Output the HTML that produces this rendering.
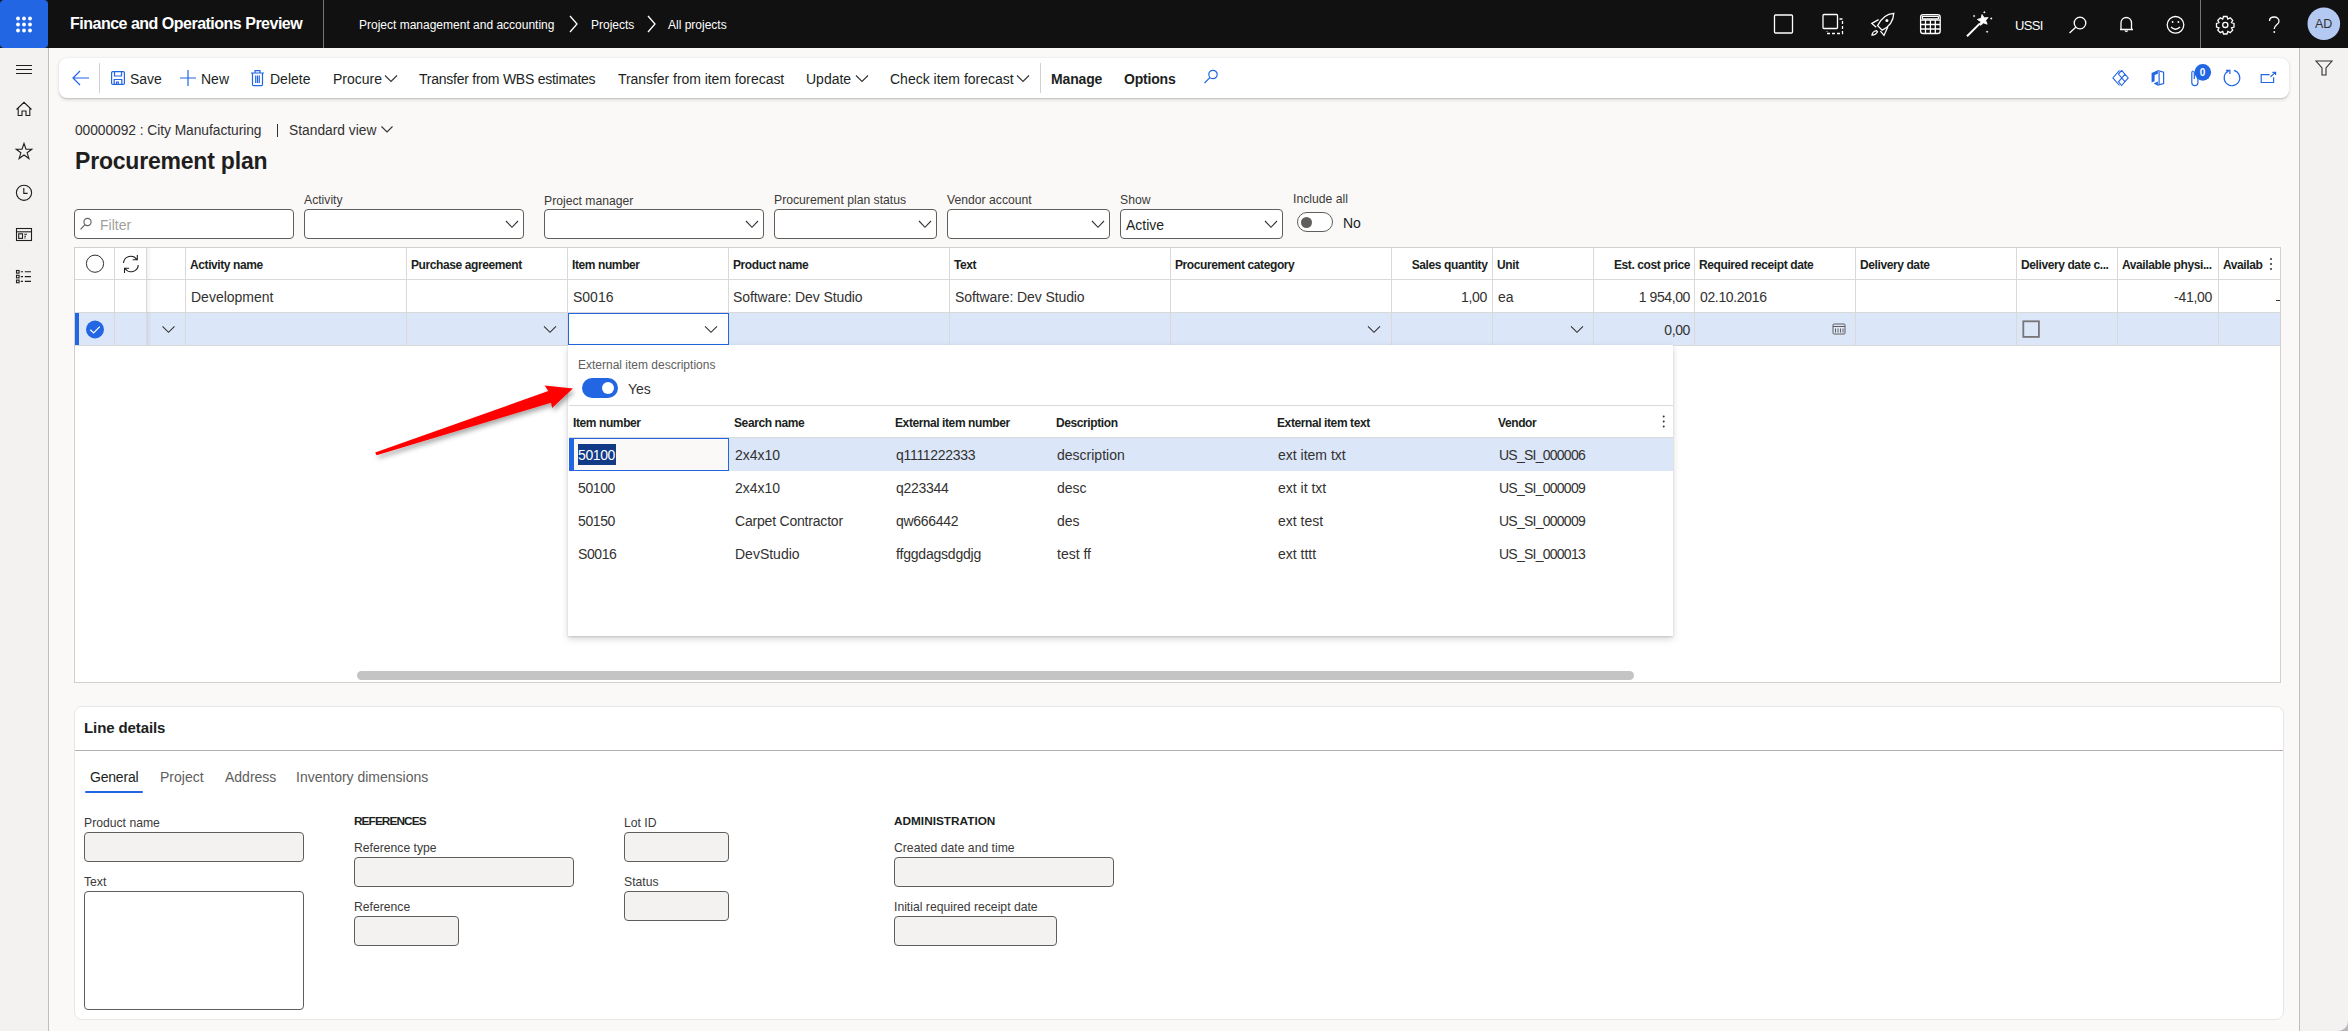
<!DOCTYPE html>
<html><head><meta charset="utf-8">
<style>
*{box-sizing:border-box;margin:0;padding:0}
html,body{width:2348px;height:1031px;overflow:hidden}
body{position:relative;background:#faf9f8;font-family:"Liberation Sans",sans-serif;color:#323130;font-size:14px}
.a{position:absolute;white-space:nowrap}
svg{position:absolute;overflow:visible}
/* top bar */
#top{left:0;top:0;width:2348px;height:48px;background:#111111}
#waffle{left:0;top:0;width:48px;height:48px;background:#2266e3;border-radius:4px}
.tb{color:#fff}
/* left nav */
#lnav{left:0;top:48px;width:49px;height:983px;background:#f3f2f1;border-right:1px solid #c0bebb}
#rpanel{left:2299px;top:48px;width:49px;height:983px;background:#f3f2f1;border-left:1px solid #c0bebb}
#cmd{left:59px;top:58px;width:2230px;height:40px;background:#fff;border-radius:8px;box-shadow:0 1.6px 3.6px rgba(0,0,0,.13),0 0.3px 0.9px rgba(0,0,0,.11)}
.ct{font-size:14px;color:#201f1e;top:70px}
.blue{stroke:#2266e3}
</style></head><body>

<!-- TOP BAR -->
<div id="top" class="a"></div>
<div id="waffle" class="a"></div>
<svg style="left:0;top:0" width="48" height="48">
 <g fill="#fff">
  <circle cx="18" cy="18.5" r="1.9"/><circle cx="24" cy="18.5" r="1.9"/><circle cx="30" cy="18.5" r="1.9"/>
  <circle cx="18" cy="24.5" r="1.9"/><circle cx="24" cy="24.5" r="1.9"/><circle cx="30" cy="24.5" r="1.9"/>
  <circle cx="18" cy="30.5" r="1.9"/><circle cx="24" cy="30.5" r="1.9"/><circle cx="30" cy="30.5" r="1.9"/>
 </g>
</svg>
<div class="a tb" style="left:70px;top:15px;font-size:16px;font-weight:bold;letter-spacing:-0.5px">Finance and Operations Preview</div>
<div class="a" style="left:323px;top:0px;width:1px;height:48px;background:#777"></div>
<div class="a tb" style="left:359px;top:18px;font-size:12px">Project management and accounting</div>
<div class="a tb" style="left:591px;top:18px;font-size:12px">Projects</div>
<div class="a tb" style="left:668px;top:18px;font-size:12px">All projects</div>
<svg style="left:0;top:0" width="2348" height="48">
 <g fill="none" stroke="#fff" stroke-width="1.3">
  <path d="M570 16 L577 24 L570 32"/>
  <path d="M648 16 L655 24 L648 32"/>
 </g>
</svg>


<!-- top right icons -->
<svg style="left:0;top:0" width="2348" height="48">
 <g fill="none" stroke="#fff" stroke-width="1.3">
  <rect x="1774.5" y="15" width="18" height="18" rx="1"/>
  <rect x="1823" y="14.5" width="14.5" height="14" rx="1"/>
  <path d="M1839.5 19 H1842.5 V33.5 H1827 V31" stroke-dasharray="3 2"/>
  <path d="M1893.8 13.3 C1886 13.8 1880.6 19.4 1877.6 25.6 L1882.2 30.2 C1888.4 27.2 1893.4 21.6 1893.8 13.3 Z"/>
  <path d="M1878.6 19.6 L1871.8 23.4 L1876.2 27.2 M1887.8 27 L1884 35.4 L1880.4 31.2"/>
  <path d="M1876.4 30.6 C1873.6 31.1 1872.1 33.6 1872 35.1 C1873.7 35.1 1876.4 33.9 1877.5 31.8 Z"/>
  <circle cx="1886.9" cy="20.5" r="1.5" fill="#fff" stroke="none"/>
  <rect x="1920.6" y="14.6" width="19.6" height="18.9" rx="2.6"/>
  <rect x="1922.4" y="16.4" width="16" height="2.6" rx="0.5"/>
  <path d="M1920.6 20.2 H1940.2 M1920.6 24.5 H1940.2 M1920.6 29 H1940.2 M1925.5 20.2 V33.5 M1930.4 20.2 V33.5 M1935.3 20.2 V33.5"/>
  <path d="M1967 36.2 L1980 23.4" stroke-width="2"/>
  <path d="M1982.0 14.5 L1984.2 17.8 L1988.1 17.5 L1985.7 20.6 L1987.2 24.2 L1983.5 22.9 L1980.5 25.4 L1980.6 21.5 L1977.3 19.4 L1981.1 18.3 Z" fill="#fff" stroke="#fff" stroke-width="0.8" stroke-linejoin="round"/>
  <path d="M1974.1 14.6 L1974.55 15.55 L1975.5 16 L1974.55 16.45 L1974.1 17.4 L1973.6499999999999 16.45 L1972.6999999999998 16 L1973.6499999999999 15.55 Z M1984.3 10.799999999999999 L1984.75 11.75 L1985.7 12.2 L1984.75 12.649999999999999 L1984.3 13.6 L1983.85 12.649999999999999 L1982.8999999999999 12.2 L1983.85 11.75 Z M1991.2 17.1 L1991.65 18.05 L1992.6000000000001 18.5 L1991.65 18.95 L1991.2 19.9 L1990.75 18.95 L1989.8 18.5 L1990.75 18.05 Z M1987.1 30.400000000000002 L1987.55 31.35 L1988.5 31.8 L1987.55 32.25 L1987.1 33.2 L1986.6499999999999 32.25 L1985.6999999999998 31.8 L1986.6499999999999 31.35 Z" fill="#fff" stroke="none"/>
  <circle cx="2080" cy="23" r="5.8"/>
  <path d="M2076 27 L2069.5 33"/>
  <path d="M2121 29.5 V23 C2121 19.5 2123.5 17.5 2126.3 17.5 C2129 17.5 2131.5 19.5 2131.5 23 V29.5 H2120 H2133"/>
  <path d="M2125 30.5 Q2126.3 32.5 2127.6 30.5"/>
  <circle cx="2175.5" cy="24.8" r="8.3"/>
  <path d="M2171 27 Q2175.5 31.5 2180 27"/>
  <circle cx="2172.6" cy="22" r="0.9" fill="#fff" stroke="none"/><circle cx="2178.4" cy="22" r="0.9" fill="#fff" stroke="none"/>
  <circle cx="2225.3" cy="24.9" r="2.6"/>
  <path d="M2223.5 16.5 H2227 L2227.8 19 L2230.2 17.8 L2232.7 20.3 L2231.5 22.7 L2234 23.5 V27 L2231.5 27.8 L2232.7 30.2 L2230.2 32.7 L2227.8 31.5 L2227 34 H2223.5 L2222.7 31.5 L2220.3 32.7 L2217.8 30.2 L2219 27.8 L2216.5 27 V23.5 L2219 22.7 L2217.8 20.3 L2220.3 17.8 L2222.7 19 Z"/>
  <path d="M2269.5 21 C2269.5 18.5 2271.5 17 2274.2 17 C2277 17 2279 18.8 2279 21.2 C2279 24.5 2274.3 25 2274.3 28.5 V29"/>
  <circle cx="2274.3" cy="32" r="0.9" fill="#fff" stroke="none"/>
 </g>
 <path d="M2200.5 0 V48" stroke="#777" stroke-width="1"/>
 <circle cx="2323.8" cy="23.8" r="16.3" fill="#b4c9f2"/>
</svg>
<div class="a tb" style="left:2015px;top:17.5px;font-size:13px;letter-spacing:-0.7px">USSI</div>
<div class="a" style="left:2315px;top:17px;font-size:12.5px;color:#323130">AD</div>


<!-- PAGE HEADER -->
<div class="a" style="left:75px;top:123px;font-size:13.8px;color:#323130;letter-spacing:-0.05px">00000092 : City Manufacturing</div>
<div class="a" style="left:277px;top:124px;width:1.3px;height:13px;background:#323130"></div>
<div class="a" style="left:289px;top:123px;font-size:13.8px;color:#323130">Standard view</div>
<svg style="left:0;top:0" width="400" height="200"><path d="M381.5 126.5 L387 132 L392.5 126.5" fill="none" stroke="#323130" stroke-width="1.1"/></svg>
<div class="a" style="left:75px;top:148px;font-size:23px;font-weight:bold;color:#201f1e;letter-spacing:-0.2px">Procurement plan</div>

<!-- FILTERS -->
<style>
.lbl{font-size:12.2px;color:#3b3a39;top:193px}
.inp{position:absolute;top:209px;height:30px;border:1px solid #605e5c;border-radius:4px;background:#fff}
.chev{fill:none;stroke:#323130;stroke-width:1.1}
</style>
<div class="inp" style="left:74px;width:220px"></div>
<svg style="left:0;top:0" width="100" height="240"><g fill="none" stroke="#605e5c" stroke-width="1.1"><circle cx="87.5" cy="222" r="3.6"/><path d="M85 224.6 L80.5 229.4"/></g></svg>
<div class="a" style="left:100px;top:217px;font-size:14px;color:#a19f9d">Filter</div>

<div class="a lbl" style="left:304px">Activity</div>
<div class="inp" style="left:304px;width:220px"></div>
<div class="a lbl" style="left:544px;top:194px">Project manager</div>
<div class="inp" style="left:544px;width:220px"></div>
<div class="a lbl" style="left:774px">Procurement plan status</div>
<div class="inp" style="left:774px;width:163px"></div>
<div class="a lbl" style="left:947px">Vendor account</div>
<div class="inp" style="left:947px;width:163px"></div>
<div class="a lbl" style="left:1120px">Show</div>
<div class="inp" style="left:1120px;width:163px"></div>
<div class="a" style="left:1126px;top:217px;font-size:14px;color:#201f1e">Active</div>
<div class="a lbl" style="left:1293px;top:192px">Include all</div>
<div class="a" style="left:1297px;top:212px;width:36px;height:20px;border:1px solid #605e5c;border-radius:10px;background:#fff"></div>
<div class="a" style="left:1301px;top:216.5px;width:11px;height:11px;border-radius:6px;background:#605e5c"></div>
<div class="a" style="left:1343px;top:215px;font-size:14px;color:#201f1e">No</div>
<svg style="left:0;top:0" width="1300" height="240">
 <g class="chev">
  <path d="M506 221 L512 227.3 L518 221"/>
  <path d="M746 221 L752 227.3 L758 221"/>
  <path d="M919 221 L925 227.3 L931 221"/>
  <path d="M1092 221 L1098 227.3 L1104 221"/>
  <path d="M1265 221 L1271 227.3 L1277 221"/>
 </g>
</svg>


<!-- GRID -->
<style>
.vl{position:absolute;top:248px;width:1px;height:97px;background:#d9d9d9}
.gh{position:absolute;top:258px;font-size:12px;font-weight:bold;color:#201f1e;letter-spacing:-0.4px;white-space:nowrap}
.gc{position:absolute;top:289px;font-size:14px;color:#323130;white-space:nowrap}
.gr{text-align:right}
</style>
<div class="a" style="left:74px;top:247px;width:2207px;height:436px;background:#fff;border:1px solid #d2d0ce"></div>
<div class="a" style="left:75px;top:313px;width:2205px;height:32px;background:#dbe6f9"></div>
<div class="a" style="left:75px;top:279px;width:2205px;height:1px;background:#d9d9d9"></div>
<div class="a" style="left:75px;top:312px;width:2205px;height:1px;background:#d9d9d9"></div>
<div class="a" style="left:75px;top:345px;width:2205px;height:1px;background:#d9d9d9"></div>
<div class="vl" style="left:114px"></div><div class="vl" style="left:146px"></div><div class="vl" style="left:185px"></div><div class="vl" style="left:406px"></div><div class="vl" style="left:567px"></div><div class="vl" style="left:728px"></div><div class="vl" style="left:949px"></div><div class="vl" style="left:1170px"></div><div class="vl" style="left:1391px"></div><div class="vl" style="left:1492px"></div><div class="vl" style="left:1593px"></div><div class="vl" style="left:1694px"></div><div class="vl" style="left:1855px"></div><div class="vl" style="left:2016px"></div><div class="vl" style="left:2117px"></div><div class="vl" style="left:2218px"></div>
<div class="a" style="left:147px;top:248px;width:5px;height:97px;background:linear-gradient(to right,rgba(0,0,0,.06),rgba(0,0,0,0))"></div>
<div class="a" style="left:75px;top:313px;width:4px;height:32px;background:#2266e3"></div>
<!-- header -->
<svg style="left:0;top:0" width="200" height="350">
 <circle cx="95" cy="263.7" r="8.6" fill="none" stroke="#323130" stroke-width="1"/>
 <g fill="none" stroke="#201f1e" stroke-width="1.1">
  <path d="M123.5 263 A7.3 7.3 0 0 1 136.8 259.5 M137.3 255 V259.8 H132.7"/>
  <path d="M138.3 265 A7.3 7.3 0 0 1 125 268.5 M124.5 273 V268.2 H129.1"/>
 </g>
 <circle cx="95" cy="329.5" r="9" fill="#2266e3"/>
 <path d="M90.3 329.8 L93.6 333 L99.8 326.6" fill="none" stroke="#fff" stroke-width="1.2"/>
 <path d="M162.5 326.3 L168.5 332.3 L174.5 326.3" fill="none" stroke="#323130" stroke-width="1.1"/>
</svg>
<div class="gh" style="left:190px">Activity name</div>
<div class="gh" style="left:411px">Purchase agreement</div>
<div class="gh" style="left:572px">Item number</div>
<div class="gh" style="left:733px">Product name</div>
<div class="gh" style="left:954px">Text</div>
<div class="gh" style="left:1175px">Procurement category</div>
<div class="gh gr" style="right:calc(2348px - 1487.5px)">Sales quantity</div>
<div class="gh" style="left:1497px">Unit</div>
<div class="gh gr" style="right:calc(2348px - 1690px)">Est. cost price</div>
<div class="gh" style="left:1699px">Required receipt date</div>
<div class="gh" style="left:1860px">Delivery date</div>
<div class="gh" style="left:2021px">Delivery date c...</div>
<div class="gh" style="left:2122px">Available physi...</div>
<div class="gh" style="left:2223px">Availab</div>
<svg style="left:0;top:0" width="2348" height="350">
 <g fill="#323130"><circle cx="2271" cy="259" r="1"/><circle cx="2271" cy="264" r="1"/><circle cx="2271" cy="269" r="1"/></g>
</svg>
<!-- row 1 -->
<div class="gc" style="left:191px">Development</div>
<div class="gc" style="left:573px">S0016</div>
<div class="gc" style="left:733px;letter-spacing:-0.1px">Software: Dev Studio</div>
<div class="gc" style="left:955px;letter-spacing:-0.1px">Software: Dev Studio</div>
<div class="gc gr" style="right:calc(2348px - 1487px);letter-spacing:-0.3px">1,00</div>
<div class="gc" style="left:1498px">ea</div>
<div class="gc gr" style="right:calc(2348px - 1690px);letter-spacing:-0.4px">1 954,00</div>
<div class="gc" style="left:1700px;letter-spacing:-0.35px">02.10.2016</div>
<div class="gc gr" style="right:calc(2348px - 2212px);letter-spacing:-0.3px">-41,00</div>
<div class="a" style="left:2276px;top:300px;width:4px;height:1.2px;background:#323130"></div>
<!-- row 2 -->
<div class="a" style="left:568px;top:313px;width:161px;height:32px;background:#fff;border:1.5px solid #2266e3"></div>
<svg style="left:0;top:0" width="2348" height="350">
 <g fill="none" stroke="#323130" stroke-width="1.1">
  <path d="M544 326.3 L550 332.3 L556 326.3"/>
  <path d="M705 326.3 L711 332.3 L717 326.3"/>
  <path d="M1368 326.3 L1374 332.3 L1380 326.3"/>
  <path d="M1571 326.3 L1577 332.3 L1583 326.3"/>
 </g>
 <g fill="none" stroke="#605e5c" stroke-width="1">
  <rect x="1833" y="324" width="12" height="10" rx="1"/>
  <path d="M1833 326.5 H1845 M1835.5 328.5 V332.5 M1838 328.5 V332.5 M1840.5 328.5 V332.5 M1843 328.5 V332.5"/>
 </g>
 <rect x="2023.3" y="321.3" width="15.6" height="15.6" fill="none" stroke="#767676" stroke-width="1.8"/>
</svg>
<div class="gc gr" style="right:calc(2348px - 1690px);top:322px;letter-spacing:-0.4px">0,00</div>
<!-- scrollbar -->
<div class="a" style="left:357px;top:671px;width:1277px;height:9px;border-radius:5px;background:#c4c4c4"></div>



<!-- LINE DETAILS -->
<style>
.fl{position:absolute;font-size:12.2px;color:#3b3a39;white-space:nowrap}
.fi{position:absolute;height:30px;border:1px solid #605e5c;border-radius:4px;background:#f3f2f1}
.sec{position:absolute;font-size:11.5px;font-weight:bold;color:#201f1e;letter-spacing:-0.5px;white-space:nowrap}
.tab{position:absolute;top:769px;font-size:14px;color:#605e5c;white-space:nowrap}
</style>
<div class="a" style="left:74px;top:706px;width:2210px;height:314px;background:#fff;border:1px solid #e8e6e4;border-radius:8px"></div>
<div class="a" style="left:84px;top:719px;font-size:15px;font-weight:bold;color:#201f1e;letter-spacing:-0.1px">Line details</div>
<div class="a" style="left:75px;top:750px;width:2208px;height:1px;background:#b3b0ad"></div>
<div class="tab" style="left:90px;color:#201f1e;letter-spacing:-0.2px">General</div>
<div class="tab" style="left:160px">Project</div>
<div class="tab" style="left:225px">Address</div>
<div class="tab" style="left:296px">Inventory dimensions</div>
<div class="a" style="left:85px;top:791px;width:58px;height:2px;border-radius:1px;background:#2266e3"></div>

<div class="fl" style="left:84px;top:816px">Product name</div>
<div class="fi" style="left:84px;top:832px;width:220px"></div>
<div class="fl" style="left:84px;top:875px">Text</div>
<div class="fi" style="left:84px;top:891px;width:220px;height:119px;background:#fff"></div>

<div class="sec" style="left:354px;top:814px;font-size:11.8px;letter-spacing:-0.9px">REFERENCES</div>
<div class="fl" style="left:354px;top:841px">Reference type</div>
<div class="fi" style="left:354px;top:857px;width:220px"></div>
<div class="fl" style="left:354px;top:900px">Reference</div>
<div class="fi" style="left:354px;top:916px;width:105px"></div>

<div class="fl" style="left:624px;top:816px">Lot ID</div>
<div class="fi" style="left:624px;top:832px;width:105px"></div>
<div class="fl" style="left:624px;top:875px">Status</div>
<div class="fi" style="left:624px;top:891px;width:105px"></div>

<div class="sec" style="left:894px;top:814px;font-size:11.8px;letter-spacing:0px">ADMINISTRATION</div>
<div class="fl" style="left:894px;top:841px">Created date and time</div>
<div class="fi" style="left:894px;top:857px;width:220px"></div>
<div class="fl" style="left:894px;top:900px">Initial required receipt date</div>
<div class="fi" style="left:894px;top:916px;width:163px"></div>

<!-- DROPDOWN -->
<style>
.lh{position:absolute;top:416px;font-size:12px;font-weight:bold;color:#201f1e;letter-spacing:-0.4px;white-space:nowrap}
.lc{position:absolute;font-size:14px;color:#323130;white-space:nowrap}
</style>
<div class="a" style="left:568px;top:345px;width:1105px;height:291px;background:#fff;box-shadow:0 3.2px 7.2px rgba(0,0,0,.16),0 0.6px 1.8px rgba(0,0,0,.13)"></div>
<div class="a" style="left:578px;top:358px;font-size:12px;color:#605e5c">External item descriptions</div>
<div class="a" style="left:582px;top:378px;width:36px;height:20px;border-radius:10px;background:#2266e3"></div>
<div class="a" style="left:601.8px;top:381.8px;width:12.2px;height:12.2px;border-radius:50%;background:#fff"></div>
<div class="a" style="left:628px;top:381px;font-size:14px;color:#323130">Yes</div>
<div class="a" style="left:569px;top:405px;width:1104px;height:1px;background:#d9d9d9"></div>
<div class="a" style="left:569px;top:437px;width:1104px;height:1px;background:#d9d9d9"></div>
<div class="lh" style="left:573px">Item number</div>
<div class="lh" style="left:734px">Search name</div>
<div class="lh" style="left:895px">External item number</div>
<div class="lh" style="left:1056px">Description</div>
<div class="lh" style="left:1277px">External item text</div>
<div class="lh" style="left:1498px">Vendor</div>
<svg style="left:0;top:0" width="2348" height="640">
 <g fill="#323130"><circle cx="1663.7" cy="416.5" r="1"/><circle cx="1663.7" cy="421.5" r="1"/><circle cx="1663.7" cy="426.5" r="1"/></g>
</svg>
<div class="a" style="left:569px;top:438px;width:1104px;height:33px;background:#dbe6f9"></div>
<div class="a" style="left:569px;top:438px;width:4px;height:33px;background:#2266e3"></div>
<div class="a" style="left:573px;top:438px;width:156px;height:32.5px;background:#faf9f8;border:1.5px solid #2266e3"></div>
<div class="a" style="left:578px;top:444px;width:38px;height:21px;background:#123a87"></div>
<div class="lc" style="left:578px;top:447px;color:#fff;letter-spacing:-0.4px">50100</div>
<div class="lc" style="left:735px;top:447px">2x4x10</div>
<div class="lc" style="left:896px;top:447px;letter-spacing:-0.3px">q1111222333</div>
<div class="lc" style="left:1057px;top:447px">description</div>
<div class="lc" style="left:1278px;top:447px">ext item txt</div>
<div class="lc" style="left:1499px;top:447px;letter-spacing:-0.75px">US_SI_000006</div>

<div class="lc" style="left:578px;top:480px;letter-spacing:-0.4px">50100</div>
<div class="lc" style="left:735px;top:480px">2x4x10</div>
<div class="lc" style="left:896px;top:480px;letter-spacing:-0.3px">q223344</div>
<div class="lc" style="left:1057px;top:480px">desc</div>
<div class="lc" style="left:1278px;top:480px">ext it txt</div>
<div class="lc" style="left:1499px;top:480px;letter-spacing:-0.75px">US_SI_000009</div>

<div class="lc" style="left:578px;top:513px;letter-spacing:-0.4px">50150</div>
<div class="lc" style="left:735px;top:513px;letter-spacing:-0.2px">Carpet Contractor</div>
<div class="lc" style="left:896px;top:513px;letter-spacing:-0.3px">qw666442</div>
<div class="lc" style="left:1057px;top:513px">des</div>
<div class="lc" style="left:1278px;top:513px">ext test</div>
<div class="lc" style="left:1499px;top:513px;letter-spacing:-0.75px">US_SI_000009</div>

<div class="lc" style="left:578px;top:546px;letter-spacing:-0.4px">S0016</div>
<div class="lc" style="left:735px;top:546px">DevStudio</div>
<div class="lc" style="left:896px;top:546px;letter-spacing:-0.2px">ffggdagsdgdjg</div>
<div class="lc" style="left:1057px;top:546px">test ff</div>
<div class="lc" style="left:1278px;top:546px">ext tttt</div>
<div class="lc" style="left:1499px;top:546px;letter-spacing:-0.75px">US_SI_000013</div>

<!-- RED ARROW -->
<svg style="left:0;top:0" width="700" height="500">
 <defs><filter id="sh" x="-20%" y="-50%" width="140%" height="200%"><feDropShadow dx="2" dy="3" stdDeviation="2.5" flood-color="#000" flood-opacity="0.35"/></filter></defs>
 <path d="M375.2 452.6 L548.3 391 L544.6 385.6 L572.9 388.6 L552.1 408 L551 402.7 L376.6 455.2 Z" fill="#ff0000" filter="url(#sh)"/>
</svg>

<!-- LEFT NAV -->
<div id="lnav" class="a"></div>
<svg style="left:0;top:0" width="48" height="300">
 <g fill="none" stroke="#201f1e" stroke-width="1.1">
  <path d="M16 65.5 H32 M16 69.5 H32 M16 73.5 H32"/>
  <path d="M16.5 109.5 L24 102.3 L31.5 109.5 M18.2 108 V115.5 H22 V111 H26 V115.5 H29.8 V108"/>
  <path d="M24 143.5 L26 149.3 L31.8 149.3 L27.1 152.8 L28.9 158.5 L24 155 L19.1 158.5 L20.9 152.8 L16.2 149.3 L22 149.3 Z"/>
  <circle cx="24" cy="192.8" r="7.6"/>
  <path d="M23.8 188 V193.4 H27.6"/>
  <rect x="16.5" y="228.5" width="15" height="12" />
  <path d="M16.5 231.8 H31.5"/>
  <rect x="18.7" y="233.8" width="3.8" height="4.6"/>
  <path d="M24.3 234.3 H27 M24.3 236.2 H26 M24.3 238 H25.6"/>
  <rect x="16.5" y="270.5" width="2.6" height="2.6"/><rect x="16.5" y="275.3" width="2.6" height="2.6"/><rect x="16.5" y="280.1" width="2.6" height="2.6"/>
  <path d="M20.8 271.8 H23 M24.8 271.8 H31 M20.8 276.6 H23 M24.8 276.6 H31 M20.8 281.4 H23 M24.8 281.4 H31"/>
 </g>
</svg>
<!-- RIGHT PANEL -->
<div id="rpanel" class="a"></div>

<!-- COMMAND BAR -->
<div id="cmd" class="a"></div>
<svg style="left:0;top:0" width="2348" height="110">
 <g fill="none" stroke="#2266e3" stroke-width="1.2">
  <path d="M73 78 H89 M80 71 L73 78 L80 85"/>
  <rect x="111.6" y="71.6" width="12.8" height="12.8" rx="1.2"/>
  <path d="M114.5 71.6 V76 H121.5 V71.6 M114.2 84.4 V79.5 H121.8 V84.4 M116.5 84.4 V82 H118.3 V84.4"/>
  <path d="M180 78 H196 M188 70 V86"/>
  <path d="M251 73 H264 M255 73 V70.6 H260 V73 M252.5 73 V84.6 Q252.5 85.6 253.5 85.6 H261.5 Q262.5 85.6 262.5 84.6 V73 M255.7 75.5 V83 M257.5 75.5 V83 M259.3 75.5 V83"/>
  <path d="M1213 74.5 m-4.2 0 a4.2 4.2 0 1 0 8.4 0 a4.2 4.2 0 1 0 -8.4 0 M1209.7 77.8 L1204.5 83"/>
 </g>
 <g fill="none" stroke="#323130" stroke-width="1.1">
  <path d="M385 75.5 L391 81.5 L397 75.5"/>
  <path d="M856 75.5 L862 81.5 L868 75.5"/>
  <path d="M1017 75.5 L1023 81.5 L1029 75.5"/>
 </g>
 <path d="M99.5 63 V93 M1040.5 63 V93" stroke="#d2d0ce" stroke-width="1"/>
</svg>
<div class="a ct" style="left:130px;top:71px">Save</div>
<div class="a ct" style="left:201px;top:71px">New</div>
<div class="a ct" style="left:270px;top:71px">Delete</div>
<div class="a ct" style="left:333px;top:71px">Procure</div>
<div class="a ct" style="left:419px;top:71px;letter-spacing:-0.25px">Transfer from WBS estimates</div>
<div class="a ct" style="left:618px;top:71px;letter-spacing:-0.05px">Transfer from item forecast</div>
<div class="a ct" style="left:806px;top:71px">Update</div>
<div class="a ct" style="left:890px;top:71px">Check item forecast</div>
<div class="a ct" style="left:1051px;top:71px;font-weight:bold;letter-spacing:-0.15px">Manage</div>
<div class="a ct" style="left:1124px;top:71px;font-weight:bold;letter-spacing:-0.2px">Options</div>
<!-- cmd right icons -->
<svg style="left:0;top:0" width="2348" height="110">
 <g fill="none" stroke="#2266e3" stroke-width="1.2">
  <path d="M2119.5 70.4 L2112.9 77.9 L2119.5 85.5 M2121.6 70.4 L2128.2 77.9 L2121.6 85.5 L2118.5 81.8 L2125.1 74.1 M2121.6 70.4 L2118.5 74.1 L2125.1 81.8" stroke-width="1.1"/>
  <path d="M2157.7 70.6 L2163.6 72.2 V83.5 L2157.7 85.2 M2159.1 72 V84" fill="none"/>
  <path d="M2151.6 73.1 L2157.9 70.2 V73.8 L2154.6 75 V81.3 L2151.6 82.6 Z M2153.6 83.6 L2157.9 81.6 V85.8 Z" fill="#2266e3" stroke="none"/>
  <path d="M2194.3 79 V73 Q2194.3 71 2192.8 71 Q2191.8 71 2191.8 73 V82.8 Q2191.8 85.6 2194.9 85.6 Q2197.9 85.6 2197.9 82.8 V77"/>
  <path d="M2234 70.4 A7.8 7.8 0 1 1 2228.6 70.9 M2226 70.3 H2229.9 V74"/>
  <path d="M2269.6 74.6 H2261.2 V82.5 H2273.6 V77.2 M2270.5 76.8 L2275.5 72.4 M2272.4 72.4 H2275.6 V75"/>
 </g>
 <circle cx="2202.8" cy="72.35" r="8.3" fill="#2266e3"/>
</svg>
<div class="a" style="left:2199.7px;top:66.8px;font-size:10px;font-weight:bold;color:#fff">0</div>
<svg style="left:0;top:0" width="2348" height="110">
 <path d="M2316 61 H2332 L2326 68 V75 H2322 V68 Z" fill="none" stroke="#323130" stroke-width="1.1"/>
</svg>


<div class="a" style="left:2336px;top:1019px;width:12px;height:12px;background:#b9b9bd"></div>
<div class="a" style="left:2336px;top:1019px;width:12px;height:12px;background:#f3f2f1;border-bottom-right-radius:10px"></div>
</body></html>
